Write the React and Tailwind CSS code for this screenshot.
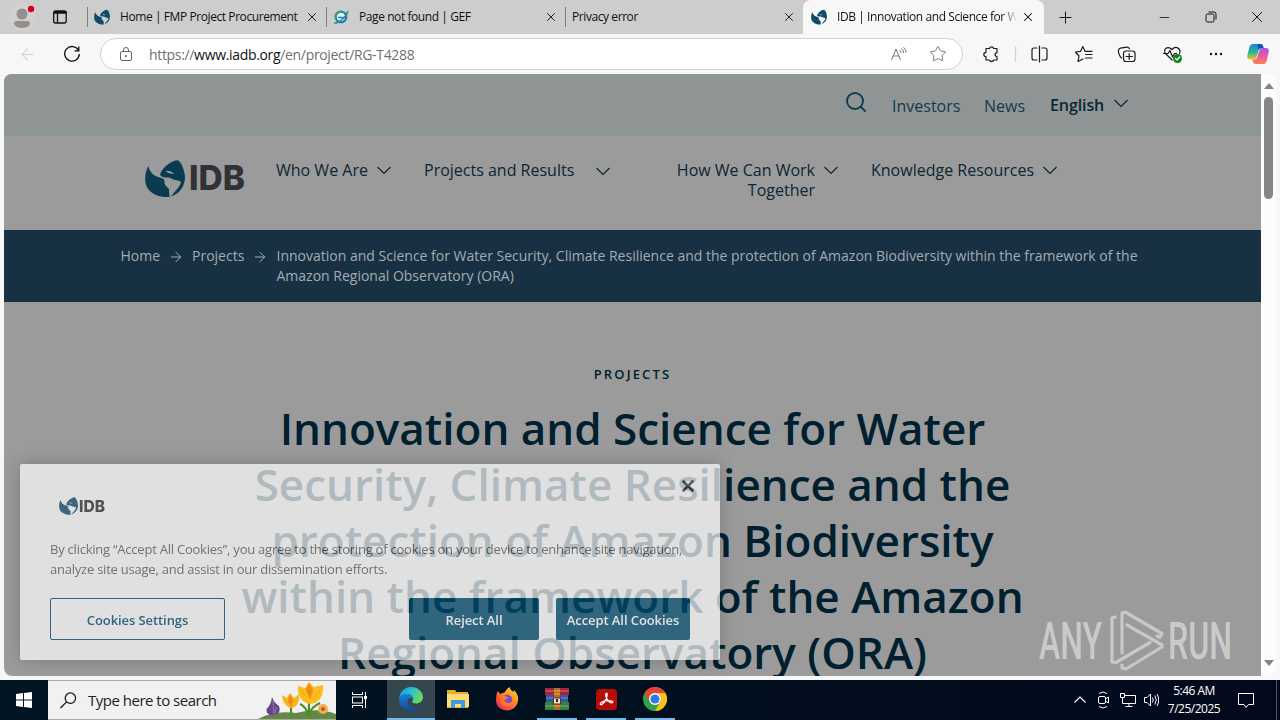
import { ArrowLeft, ArrowRight, Minus, Plus, Search, Star, X } from "lucide-react"

const tabs = [
  { title: "Home | FMP Project Procurement", icon: "idb", width: "w-[239px]" },
  { title: "Page not found | GEF", icon: "gef", width: "w-[239px]" },
  { title: "Privacy error", icon: null, width: "w-[238px]" },
]

function Globe({ className }) {
  return (
    <svg viewBox="0 0 40 37" className={className} fill="currentColor">
      <path d="M3.500 6C4 11 8 15.500 13 17c4 1 7 2 6.500 5-.5 3 2.500 4.500 4.500 7l.5 8C14 38 3 33 .8 24-.5 17 .5 11 3.500 6z" />
      <path d="M15 15c2-7 7-10 10-12 4-2.500 7-3 8-2.800 3 1.800 7 9.800 7 17.800-.5 9-6 16-14 18.500 4-5.500 9-9.500 10-14.500-3-2-8-2-12-4.500-3 0-7 .5-9-2.500z" />
      <path d="M20 11l5 .3 4.500 2.700-5-.8z" fill="#fff" fillOpacity=".6" />
    </svg>
  )
}

function GefIcon() {
  return (
    <svg viewBox="0 0 16 16" className="h-4 w-4" fill="none">
      <circle cx="8" cy="8" r="5.300" fill="#eef6f6" stroke="#1c77b5" strokeWidth="2" />
      <path d="M2.500 9A5.500 5.500 0 0 1 11 3.500" stroke="#35a36a" strokeWidth="2" />
      <path d="M5 8.500h8" stroke="#1c77b5" strokeWidth="1.500" />
      <path d="M1 14C5 14.500 13 9 15 2" stroke="#2c8f8c" strokeWidth="1.500" />
    </svg>
  )
}

function Caret({ className }) {
  return (
    <svg viewBox="0 0 20 20" className={`h-5 w-5 ${className}`} fill="none" stroke="currentColor" strokeWidth="1.200">
      <path d="M3.500 7L10 13.500 16.500 7" />
    </svg>
  )
}

function Tab({ tab }) {
  return (
    <div className={`flex h-5 items-center border-l border-[#7d7d7d] pl-[6px] pr-[7px] ${tab.width}`}>
      {tab.icon === "idb" && <Globe className="mr-[10px] h-4 w-4 text-[#0f4c69]" />}
      {tab.icon === "gef" && <span className="mr-[10px]"><GefIcon /></span>}
      <span className="flex-1 whitespace-nowrap text-[12px] tracking-[-0.42px]">{tab.title}</span>
      <X className="h-[14px] w-[14px]" strokeWidth={1.6} />
    </div>
  )
}

function TabBar() {
  return (
    <div className="flex h-[34px] items-center bg-[#cdcdcd] text-[#111]">
      <svg viewBox="0 0 87 34" className="h-[34px] w-[87px]">
        <circle cx="22" cy="17" r="14" fill="#d3d0ce" />
        <circle cx="22" cy="14" r="5.500" fill="#92908e" />
        <path d="M14 24q0-3 3-3h10q3 0 3 3q-2 4-8 4t-8-4z" fill="#92908e" />
        <circle cx="31" cy="9" r="3.200" fill="#d5001f" />
        <rect x="53.700" y="11" width="12.500" height="12" rx="2" fill="none" stroke="#111" strokeWidth="1.300" />
        <path d="M54 13h12.500M57.500 13v10" stroke="#111" strokeWidth="1.300" />
        <path d="M54 12h12.500" stroke="#111" strokeWidth="2" />
      </svg>
      {tabs.map((t) => <Tab key={t.title} tab={t} />)}
      <div className="flex h-[34px] w-[241px] items-center rounded-t-lg bg-[#f7f7f7] pl-[8px] pr-[9px]">
        <Globe className="mr-[10px] h-4 w-4 text-[#0f4c69]" />
        <span className="w-[180px] whitespace-nowrap bg-linear-to-r from-[#111] from-92% to-transparent bg-clip-text text-[12px] tracking-[-0.42px] text-transparent">IDB | Innovation and Science for W</span>
        <X className="ml-auto h-[14px] w-[14px]" strokeWidth={1.8} />
      </div>
      <Plus className="ml-[12px] h-[19px] w-[19px]" strokeWidth={1.3} />
      <Minus className="ml-[82px] h-[15px] w-[15px]" strokeWidth={1.3} />
      <svg viewBox="0 0 12 12" className="ml-[33px] h-3 w-3" fill="none" stroke="#111">
        <rect x="1" y="3" width="8" height="8" rx="1.500" />
        <path d="M3.500 1H9q2 0 2 2v5.500" />
      </svg>
      <X className="ml-[31px] h-[18px] w-[18px]" strokeWidth={1.3} />
    </div>
  )
}

function ToolbarIcons() {
  return (
    <svg viewBox="0 0 312 40" className="h-[40px] w-[312px]" fill="none" stroke="#1c1c1c" strokeWidth="1.200" strokeLinejoin="round" strokeLinecap="round">
      <path d="M18 14.500h3.500a2.200 2.200 0 0 1 4.200 0H29v4.200a1.800 1.800 0 1 0 0 3.800V26h-3.300a2.200 2.200 0 0 1-4.200 0H18v-3.300a2.200 2.200 0 0 1 0-4.400z" />
      <path d="M47.500 13v14" stroke="#d0d0d0" />
      <path d="M69 14h-3a2 2 0 0 0-2 2v8a2 2 0 0 0 2 2h3M74 14h3a2 2 0 0 1 2 2v8a2 2 0 0 1-2 2h-3M71.500 12v16" />
      <path d="M115 25l-5 2.500 1-5.500-3.500-4 5-.6 2.300-4.800 2.300 4.800H124M117.500 20.500h6.500M117.500 24h6.500" />
      <rect x="155.500" y="17" width="11.500" height="10.500" rx="2.500" />
      <path d="M161.200 19.500v6M158 22.500h6.500M153.500 24c-2.500-2-3.500-7-3-8q.4-1.500 2-1.800l6-1q2-.2 3 1.500" />
      <path d="M204 26l-6.500-6.500c-3-4 2-8.500 6.500-4 4-4.500 9.500-.5 7.500 4M195.500 19.500h4.500l2-3 2.500 6.500 2-3.500h2" />
      <circle cx="209.500" cy="24.500" r="4.500" fill="#11811d" stroke="none" />
      <path d="M207.500 24.500l1.500 1.500 2.700-3" stroke="white" />
      <g fill="#111" stroke="none"><circle cx="243" cy="20" r="1.200" /><circle cx="248" cy="20" r="1.200" /><circle cx="253" cy="20" r="1.200" /></g>
      <defs>
        <linearGradient id="cop1" x1="0" y1="0" x2="0" y2="1"><stop stopColor="#1687e8" /><stop offset=".55" stopColor="#31b58c" /><stop offset="1" stopColor="#f1c51d" /></linearGradient>
        <linearGradient id="cop2" x1="0" y1="0" x2="0" y2="1"><stop stopColor="#a355ed" /><stop offset=".5" stopColor="#ee579c" /><stop offset="1" stopColor="#f98252" /></linearGradient>
      </defs>
      <g stroke="none">
        <path d="M284.500 10h8q2 0 2.500 2l.5 2h-2q-2 0-2.700 2.300L288.600 23q-.8 2.500-3.500 2.500h-3q-3.500 0-2.800-4l2-8q1-3.500 3.200-3.500z" fill="url(#cop1)" />
        <path d="M295.500 30h-8q-2 0-2.500-2l-.5-2.500h2q2 0 2.700-2.300l2.200-6.700q.8-2.500 3.500-2.500h3q3.500 0 2.800 4l-2 8.500q-1 3.500-3.200 3.500z" fill="url(#cop2)" />
        <path d="M289 10h3.500q2 0 2.500 2l.7 2.200h-2.500q-1.700 0-2.400 1.800z" fill="#1d4fb8" />
      </g>
    </svg>
  )
}

function Toolbar() {
  return (
    <div className="flex h-[40px] items-center bg-[#f7f7f7]">
      <ArrowLeft className="ml-[18px] h-[19px] w-[19px] text-[#cfcfcf]" strokeWidth={1.3} />
      <svg viewBox="0 0 18 18" className="ml-[26px] h-[18px] w-[18px]" fill="none" stroke="#111" strokeWidth="1.300">
        <path d="M15.500 5.500A7.300 7.300 0 1 0 16.300 9M15.800 1.500v4.300h-4.300" />
      </svg>
      <div className="ml-[19px] flex h-8 w-[863px] items-center rounded-full border border-[#d2d2d2] bg-white pl-[18px] pr-[15px]">
        <svg viewBox="0 0 14 16" className="h-4 w-[14px]" fill="none" stroke="#666">
          <rect x="1.500" y="5.500" width="11" height="9" rx="1.500" /><path d="M4.500 5.500V4a2.500 2.500 0 0 1 5 0v1.500" /><circle cx="7" cy="10" r=".7" fill="#666" />
        </svg>
        <span className="ml-[16px] flex-1 text-[14px] tracking-[-0.33px] text-[#707070]">https://<span className="text-[#111]">www.iadb.org</span>/en/project/RG-T4288</span>
        <svg viewBox="0 0 17 16" className="h-4 w-[17px]" fill="none" stroke="#777">
          <path d="M1.500 14L6 3l4.500 11M3.200 10h5.700M9.500 4q1.500 1 1.500 3M11.500 2.500q2.200 1.500 2 4.500M13.500 1.200q2.800 2 2.500 5.500" />
        </svg>
        <Star className="ml-[22px] h-[18px] w-[18px] text-[#777]" strokeWidth={1.3} />
      </div>
      <span className="ml-[5px]"><ToolbarIcons /></span>
    </div>
  )
}

function SiteHeader() {
  return (
    <header className="text-[#0c2632]">
      <div className="flex h-[62px] bg-[#8f9595] pl-[840px] pt-4">
        <Search className="h-6 w-6 text-[#0e3c51]" strokeWidth={1.9} />
        <span className="ml-[24px] mt-1 w-[92px] text-[16px] leading-6 text-[#173949]">Investors</span>
        <span className="mt-1 w-[66px] text-[16px] leading-6 text-[#173949]">News</span>
        <span className="mt-[3px] w-[60px] text-[16px] font-semibold leading-6 tracking-[-0.1px]">English</span>
        <Caret className="ml-px mt-[3px]" />
      </div>
      <div className="flex h-[94px] bg-[#9b9b9b] pl-[141px] pt-6 text-[16px] leading-5">
        <Globe className="h-[37px] w-10 text-[#0b3b50]" />
        <svg viewBox="0 0 56 37" className="ml-[4px] h-[37px] w-[56px]" fill="#303236">
          <text x="0" y="30" fontSize="34" fontWeight="800" fontFamily="Inter, sans-serif" textLength="56" lengthAdjust="spacingAndGlyphs">IDB</text>
        </svg>
        <span className="ml-[31px] w-[98px]">Who We Are</span>
        <Caret />
        <span className="ml-[30px] w-[169px]">Projects and Results</span>
        <Caret className="mt-px" />
        <span className="ml-[52px] w-[150px] text-right">How We Can Work Together</span>
        <Caret className="ml-[6px]" />
        <span className="ml-[30px] w-[169px] whitespace-nowrap">Knowledge Resources</span>
        <Caret />
      </div>
      <nav className="flex h-[72px] bg-[#173143] pl-[116px] pt-4 text-[14px] leading-5 text-[#a4acb1]">
        <span className="w-[48px] pl-[0.5px]">Home</span>
        <ArrowRight className="mt-[3px] h-4 w-4" strokeWidth={1.5} />
        <span className="ml-[8px] w-[60px]">Projects</span>
        <ArrowRight className="mt-[3px] h-4 w-4" strokeWidth={1.5} />
        <span className="ml-[8.500px] whitespace-nowrap">Innovation and Science for Water Security, Climate Resilience and the protection of Amazon Biodiversity within the framework of the<br />Amazon Regional Observatory (ORA)</span>
      </nav>
    </header>
  )
}

function CookieBanner() {
  return (
    <div className="absolute left-4 top-[390px] h-[196px] w-[700px] rounded-[2px] bg-white px-[30px] text-[13px] opacity-69 shadow-[0_0_18px_rgba(0,0,0,0.3)]">
      <div className="flex justify-between">
        <div className="ml-[9px] mt-[33px] flex">
          <Globe className="h-[18px] w-[19px] text-[#174e70]" />
          <svg viewBox="0 0 56 37" className="ml-[1px] h-[18px] w-[27px]" fill="#303236">
            <text x="0" y="31" fontSize="34" fontWeight="800" fontFamily="Inter, sans-serif" textLength="54" lengthAdjust="spacingAndGlyphs">IDB</text>
          </svg>
        </div>
        <X className="-mr-[7px] mt-[13px] h-[18px] w-[18px] text-[#444]" strokeWidth={3.4} />
      </div>
      <p className="mt-[24px] whitespace-nowrap leading-5 tracking-[-0.23px] text-[#606060]">
        By clicking “Accept All Cookies”, you agree to the storing of cookies on your device to enhance site navigation,<br />analyze site usage, and assist in our dissemination efforts.
      </p>
      <div className="mt-[19px] flex font-semibold leading-5 tracking-[-0.08px] text-white">
        <button className="h-[42px] w-[175px] rounded-[2px] border border-[#004e70] pt-px text-[#004e70]">Cookies Settings</button>
        <button className="ml-[184px] h-[42px] w-[130px] rounded-[2px] bg-[#004e70] pt-px">Reject All</button>
        <button className="ml-[17px] h-[42px] w-[134px] whitespace-nowrap rounded-[2px] bg-[#004e70] pt-px">Accept All Cookies</button>
      </div>
    </div>
  )
}

function Watermark() {
  return (
    <svg viewBox="0 0 200 70" className="absolute left-[1032px] top-[530px] h-[70px] w-[200px]" fill="#cacaca" fontFamily="Roboto, sans-serif" fontWeight="500" fontSize="51">
      <text x="3" y="55" textLength="63" lengthAdjust="spacingAndGlyphs">ANY</text>
      <text x="132" y="55" textLength="64" lengthAdjust="spacingAndGlyphs">RUN</text>
      <g fill="none" stroke="#c8c8c8" strokeWidth="3.200" strokeLinejoin="round" strokeLinecap="round">
        <path d="M86 49V9l3-1 37 21.500-2 4-3-1.500" />
        <path d="M91 21l35 20v2L90 65l-4-1v-3" />
        <path d="M79 13l-3 1v44l4 .5 34-20" />
      </g>
    </svg>
  )
}

function Scrollbar() {
  return (
    <div className="flex w-[15px] flex-col items-center rounded-r-lg bg-[#fcfcfc] py-[10px]">
      <svg viewBox="0 0 10 6" className="-mt-px h-[6px] w-[10px]"><path d="M0 6L5 0l5 6z" fill="#858585" /></svg>
      <div className="mt-[8px] h-[102px] w-[9px] rounded-full bg-[#858585]" />
      <svg viewBox="0 0 10 6" className="mt-auto h-[6px] w-[10px]"><path d="M0 0l5 6 5-6z" fill="#858585" /></svg>
    </div>
  )
}

function Flowers() {
  return (
    <svg viewBox="0 0 78 38" className="h-[38px] w-[78px]">
      <path d="M0 38q16-9 38-6 22-6 40 1v5z" fill="#648944" />
      <path d="M33 35V25M51 36V20M51 34q2-8 11-12M51 34q-4-9-9-11" stroke="#4b8e2b" strokeWidth="2.200" fill="none" />
      <path d="M14 16q2 6 7 9 3 7-5 9-8 1-7.500-6 4.500-4 5.500-12z" fill="#67458c" />
      <path d="M15 20l1 13M19 26l-3 7" stroke="#9874b6" />
      <path d="M24 14l5 3 3-5 4 5 5-4q1 8-3 12-5 4-9 0-5-4-5-11z" fill="#f9b51e" />
      <path d="M40 5l7 2 4-6 5 5 9-2q1 11-5 16-8 6-15 0-6-6-5-15z" fill="#fbbd1a" />
      <path d="M51 2l4 7-3 9-4-9zM32 13l3 7-2 6-3-6zM43 8l4 7M62 8l-5 8" fill="#f28819" stroke="#f09a1c" strokeWidth=".8" />
      <circle cx="65" cy="28" r="5" fill="#f2ad54" /><circle cx="65" cy="28" r="2" fill="#b75b1f" />
    </svg>
  )
}

function EdgeIcon() {
  return (
    <svg viewBox="0 0 24 24" className="h-6 w-6">
      <defs>
        <linearGradient id="edgeTop" x1="0" x2="1" y1="0" y2=".4"><stop stopColor="#1698df" /><stop offset=".55" stopColor="#2ac3cf" /><stop offset="1" stopColor="#67da62" /></linearGradient>
        <linearGradient id="edgeLow" x1="0" x2="0" y1="0" y2="1"><stop stopColor="#1684d6" /><stop offset="1" stopColor="#114b99" /></linearGradient>
      </defs>
      <path d="M0 12C1 4 6 0 12 0c7 0 12 5 12 10 0 4-3 6.500-7 6.500-3 0-4-1-4-2 1-1 1.500-2 1-3.500C13 8 10 6.500 7 7c-4 .5-6.500 3-7 5z" fill="url(#edgeTop)" />
      <path d="M0 12c1-4 5-6 9-5 3 .6 5 2.500 5 5-2-2-5-1-5.500 2-.5 4 3 7.500 8 7 2-.2 4-1 5.500-2-2 3-6 5-10 5C5 24 0 19 0 12z" fill="url(#edgeLow)" />
    </svg>
  )
}

function FolderIcon() {
  return (
    <svg viewBox="0 0 22 20" className="h-5 w-[22px]">
      <path d="M0 1h8l1.500 2H21v16H0z" fill="#e8ad2c" />
      <path d="M0 5h22v13H0z" fill="#ffdb74" />
      <path d="M4 19v-8h14v8h-4v-4H8v4z" fill="#3f9bd9" />
    </svg>
  )
}

function FirefoxIcon() {
  return (
    <svg viewBox="0 0 24 24" className="h-6 w-6">
      <defs>
        <linearGradient id="fox" x1="1" y1="0" x2=".2" y2="1"><stop stopColor="#ffe536" /><stop offset=".45" stopColor="#ff8d22" /><stop offset="1" stopColor="#f2245f" /></linearGradient>
      </defs>
      <path d="M2.500 4l3 3q2-1.500 4-1.500Q11 2 14.500 0q.5 3 4 5l.5-2q5 5 4 11c-1 6-6 9.500-11 9.500S1 20 1 13q0-5 1.500-9z" fill="url(#fox)" />
      <circle cx="12" cy="13" r="5.200" fill="#7749d4" />
      <path d="M5 9q3-2 5.500 0l3 1.500q-1 2-3.500 2-1 3 3 3.500 3 0 4.500-2-1 6-7 5.500T5 9z" fill="#ff7628" />
    </svg>
  )
}

function RarIcon() {
  return (
    <svg viewBox="0 0 24 22" className="h-[22px] w-6">
      <path d="M0 0h24v7H0z" fill="#a92337" /><path d="M1 7h22v7H1z" fill="#3159a7" /><path d="M0 14h24v8H0z" fill="#35843c" />
      <path d="M0 3h24M1 10h22M0 18h24" stroke="#d8c6c0" strokeOpacity=".5" />
      <path d="M9 0h6v22H9z" fill="#b7682a" /><path d="M9 3h6M9 6h6M9 18h6" stroke="#efb44a" />
      <rect x="8.500" y="10" width="7" height="6" fill="#f3e4c5" stroke="#4b3322" /><path d="M12 11v3" stroke="#222" strokeWidth="2" />
    </svg>
  )
}

function AcrobatIcon() {
  return (
    <svg viewBox="0 0 22 22" className="h-[21px] w-[21px]">
      <rect width="22" height="22" rx="4" fill="#b50d08" />
      <path d="M4.500 16c-.8-2 5-4 9-3.800 4 0 5 1.500 3.500 2.200-2 .8-6.300-3.200-6.800-7.400-.3-3.500 1.600-3.300 1.500-.8C11.500 10.500 6.500 18 4.500 16z" fill="none" stroke="white" strokeWidth="1.300" />
    </svg>
  )
}

function ChromeIcon() {
  return (
    <svg viewBox="0 0 24 24" className="h-6 w-6">
      <circle cx="12" cy="12" r="12" fill="#34a144" />
      <path d="M1.600 6A12 12 0 0 1 22.400 6H12a6 6 0 0 0-5.200 9z" fill="#e94335" />
      <path d="M22.400 6A12 12 0 0 1 12 24l5.200-9A6 6 0 0 0 12 6z" fill="#fbc116" />
      <circle cx="12" cy="12" r="6" fill="white" /><circle cx="12" cy="12" r="4.600" fill="#3478e5" />
    </svg>
  )
}

const apps = [
  { name: "edge", Icon: EdgeIcon, style: "w-12 bg-[#34464e] border-[#76b9ed]" },
  { name: "files", Icon: FolderIcon, style: "mr-2 ml-0.5 border-transparent" },
  { name: "firefox", Icon: FirefoxIcon, style: "mr-2 ml-0.5 border-transparent" },
  { name: "winrar", Icon: RarIcon, style: "ml-[3px] w-10 border-[#76b9ed]" },
  { name: "acrobat", Icon: AcrobatIcon, style: "ml-[3px] w-10 border-[#76b9ed]" },
  { name: "chrome", Icon: ChromeIcon, style: "ml-[3px] w-10 border-[#76b9ed]" },
]

function Taskbar() {
  return (
    <div className="flex h-10 items-center bg-linear-to-r from-[#001521] to-[#02091c] text-white">
      <svg viewBox="0 0 16 16" className="mx-4 h-4 w-4" fill="white"><path d="M0 2l7-1v6.500H0zM8 1l8-1v7.500H8zM0 8.500h7V15l-7-1zM8 8.500h8V16l-8-1z" /></svg>
      <div className="flex h-10 w-[288px] items-center border-y border-[#a8a8a8] bg-[#f1f1f1] pl-3 text-[#222]">
        <svg viewBox="0 0 18 18" className="h-[17px] w-[17px]" fill="none" stroke="#111" strokeWidth="1.300"><circle cx="11" cy="6.500" r="5.500" /><path d="M7 10.500L.5 17" /></svg>
        <span className="ml-[11px] flex-1 text-[15px] tracking-[-0.5px]">Type here to search</span>
        <Flowers />
      </div>
      <svg viewBox="0 0 18 16" className="ml-[15px] mr-[18px] h-4 w-[18px]" fill="none" stroke="white">
        <path d="M1.500 0v2.500h10V0M1.500 16v-2.500h10V16M14.500 0v16" /><rect x="1.500" y="5" width="10" height="6" /><path d="M14.500 4v3" strokeWidth="3" />
      </svg>
      {apps.map(({ name, Icon, style }) => (
        <div key={name} className="w-[49px]">
          <div className={`flex h-10 items-center justify-center border-b-2 ${style}`}><Icon /></div>
        </div>
      ))}
      <svg viewBox="0 0 14 8" className="ml-auto h-2 w-[14px]" fill="none" stroke="white" strokeWidth="1.200"><path d="M1.500 6.500L7 1l5.500 5.500" /></svg>
      <svg viewBox="0 0 62 18" className="ml-[10px] h-[18px] w-[62px]" fill="none" stroke="white">
        <rect x="1.500" y="5.500" width="7" height="7" rx="1.500" /><path d="M8.500 8l3-2v6l-3-2M2 2.500q4-3 8 0M2 15.500q4 3 8 0" />
        <path d="M27 4.500h11.500v8H25.500V9M32 12.500v3M28.500 15.500h7M23.500 2.500h4v4h-4zM25.500 6.500V9" />
        <path d="M47.500 6.500h2.500l3.500-3.500v12L50 11.500h-2.500zM55.500 6.500q1.500 2.500 0 5M57.800 4.500q3 4.500 0 9M60 3q3.500 6 0 12" />
      </svg>
      <div className="ml-[5px] w-[60px] whitespace-nowrap text-center text-[12px] leading-[18px] tracking-[-0.5px]">
        <div>5:46 AM</div>
        <div>7/25/2025</div>
      </div>
      <svg viewBox="0 0 18 17" className="ml-[13px] h-[17px] w-[18px]" fill="none" stroke="white"><path d="M1.500 1.500h15v11h-5L9 15.500l-2-3H1.500z" /></svg>
      <div className="ml-[21px] h-10 w-[4px] border-l border-[#4b5261]" />
    </div>
  )
}

export default function App() {
  return (
    <div className="flex h-[720px] w-[1280px] flex-col overflow-hidden bg-[#f7f7f7] font-['Open_Sans','Noto_Sans',sans-serif]">
      <TabBar />
      <Toolbar />
      <div className="mx-1 flex h-[602px]">
        <div className="relative w-[1257px] overflow-hidden rounded-bl-lg rounded-tl-lg bg-[#9b9b9b]">
          <SiteHeader />
          <main className="pt-[61px] text-center text-[#00202f]">
            <p className="text-[13px] font-semibold leading-[22px] tracking-[2.15px]">PROJECTS</p>
            <h1 className="mt-[15px] whitespace-nowrap text-[44px] font-semibold leading-[56px]">
              Innovation and Science for Water<br />Security, Climate Resilience and the<br />protection of Amazon Biodiversity<br />within the framework of the Amazon<br />Regional Observatory (ORA)
            </h1>
          </main>
          <CookieBanner />
          <Watermark />
        </div>
        <Scrollbar />
      </div>
      <div className="h-1" />
      <Taskbar />
    </div>
  )
}
